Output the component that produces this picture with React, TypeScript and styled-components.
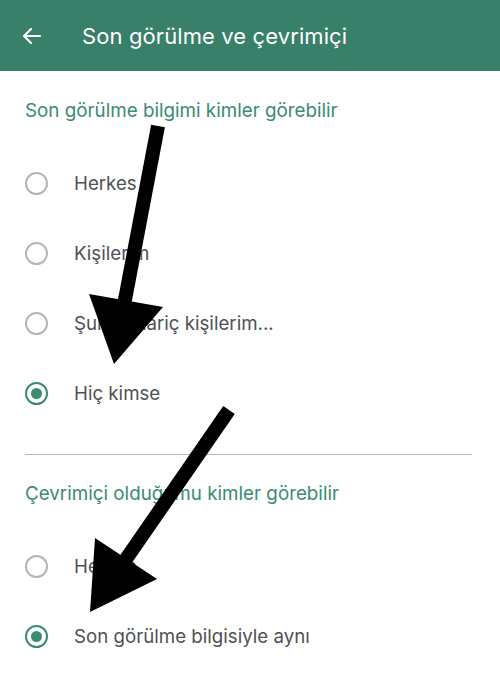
import styled, { createGlobalStyle } from 'styled-components';

const GlobalStyle = createGlobalStyle`
  html, body {
    margin: 0;
    padding: 0;
    background: #fff;
  }
  body {
    font-family: Inter, "Noto Sans", sans-serif;
  }
`;

const Page = styled.div`
  position: relative;
  width: 500px;
  height: 698px;
  overflow: hidden;
  background: #fff;
`;

const TopBar = styled.header`
  height: 71px;
  background: #38806a;
  display: flex;
  align-items: center;
  padding-left: 20px;
  gap: 38px;
  color: #fff;
`;

const Title = styled.h1`
  margin: 0;
  font-size: 22px;
  font-weight: 400;
  letter-spacing: 0.1px;
`;

const Content = styled.main`
  padding: 28px 28px 0 25px;
`;

const SectionTitle = styled.div`
  height: 24px;
  line-height: 24px;
  font-size: 18.8px;
  color: #3b8a72;
  margin-bottom: 25px;
`;

const Row = styled.label`
  height: 70px;
  display: flex;
  align-items: center;
  gap: 26px;
  font-size: 18.7px;
  color: #4e5154;
`;

const Radio = styled.span<{ $checked?: boolean }>`
  box-sizing: border-box;
  width: 23px;
  height: 23px;
  border-radius: 50%;
  border: 2px solid ${(p) => (p.$checked ? '#3b8a72' : '#b5b5b5')};
  display: flex;
  align-items: center;
  justify-content: center;

  &::after {
    content: '';
    width: 11px;
    height: 11px;
    border-radius: 50%;
    background: #3b8a72;
    display: ${(p) => (p.$checked ? 'block' : 'none')};
  }
`;

const Divider = styled.hr`
  border: none;
  border-top: 1px solid #b8b8b8;
  margin: 26px 0 27px;
`;

const Overlay = styled.svg`
  position: absolute;
  left: 0;
  top: 0;
  pointer-events: none;
`;

type Option = { label: string; checked?: boolean };

const lastSeen: Option[] = [
  { label: 'Herkes' },
  { label: 'Kişilerim' },
  { label: 'Şunlar hariç kişilerim...' },
  { label: 'Hiç kimse', checked: true },
];

const online: Option[] = [
  { label: 'Herkes' },
  { label: 'Son görülme bilgisiyle aynı', checked: true },
];

function Options({ items }: { items: Option[] }) {
  return (
    <>
      {items.map((o) => (
        <Row key={o.label}>
          <Radio $checked={o.checked} />
          {o.label}
        </Row>
      ))}
    </>
  );
}

export default function App() {
  return (
    <Page>
      <GlobalStyle />
      <TopBar>
        <svg width="24" height="24" viewBox="0 0 24 24" fill="none" stroke="#fff" strokeWidth="2.2" strokeLinecap="round" strokeLinejoin="round">
          <path d="M20 12H4M11 5l-7 7 7 7" />
        </svg>
        <Title>Son görülme ve çevrimiçi</Title>
      </TopBar>
      <Content>
        <SectionTitle>Son görülme bilgimi kimler görebilir</SectionTitle>
        <Options items={lastSeen} />
        <Divider />
        <SectionTitle>Çevrimiçi olduğumu kimler görebilir</SectionTitle>
        <Options items={online} />
      </Content>
      <Overlay width="500" height="698" viewBox="0 0 500 698">
        <line x1="158" y1="126" x2="124" y2="305" stroke="#000" strokeWidth="14" />
        <polygon points="89,294 163,307 114,364" fill="#000" />
        <line x1="229" y1="410" x2="124" y2="562" stroke="#000" strokeWidth="14" />
        <polygon points="95,538 157,579 90,612" fill="#000" />
      </Overlay>
    </Page>
  );
}
